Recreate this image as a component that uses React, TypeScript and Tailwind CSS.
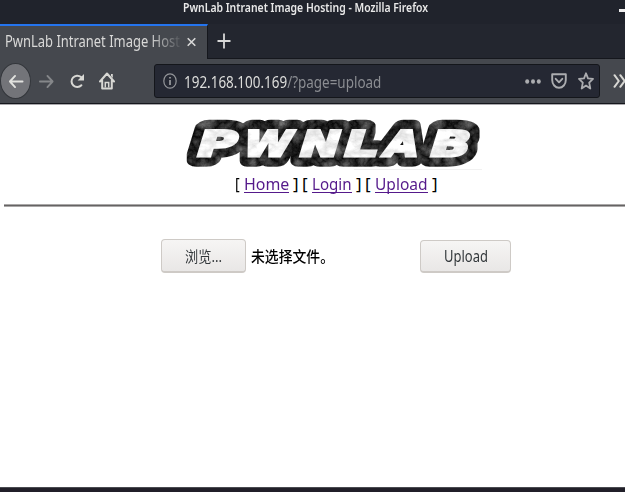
import { useLayoutEffect, useRef, useState, type ReactNode } from "react";

type FitProps = { width: number; className?: string; children: ReactNode };

// Keeps a line of text at a fixed width by condensing it horizontally.
function Fit({ width, className = "", children }: FitProps) {
  const ref = useRef<HTMLSpanElement>(null);
  const [scale, setScale] = useState(1);
  useLayoutEffect(() => {
    if (ref.current) setScale(width / ref.current.offsetWidth);
  }, [width]);
  return (
    <span className={`inline-block shrink-0 whitespace-nowrap ${className}`} style={{ width }}>
      <span ref={ref} className="inline-block origin-left" style={{ transform: `scaleX(${scale})` }}>
        {children}
      </span>
    </span>
  );
}

// left edge on the baseline, wanted ink width, glyph ink start and end in em
const letters = [
  { ch: "P", x: 199, w: 32, a: 0.092, b: 0.685 },
  { ch: "W", x: 242, w: 45, a: 0.03, b: 1.073 },
  { ch: "N", x: 301, w: 31, a: 0.092, b: 0.745 },
  { ch: "L", x: 346, w: 27, a: 0.092, b: 0.6 },
  { ch: "A", x: 382, w: 33, a: 0.003, b: 0.771 },
  { ch: "B", x: 432, w: 32, a: 0.092, b: 0.706 },
];

function Word({ className }: { className: string }) {
  return (
    <g className={className}>
      {letters.map(({ ch, x, w, a, b }) => {
        const size = 35;
        const s = w / ((b - a) * size);
        return (
          <text
            key={ch}
            fontSize={size}
            transform={`translate(${x - 186} 39.7) skewX(-17) scale(${s} 1) translate(${-a * size} 0)`}
          >
            {ch}
          </text>
        );
      })}
    </g>
  );
}

function Logo() {
  return (
    <svg width="300" height="56" viewBox="0 0 300 56" className="block overflow-visible font-['DejaVu_Sans',sans-serif] font-bold">
      <defs>
        <filter id="darkMarble" x="0" y="0" width="300" height="56" filterUnits="userSpaceOnUse" colorInterpolationFilters="sRGB">
          <feMorphology in="SourceAlpha" operator="dilate" radius="0 3" result="plate" />
          <feTurbulence type="turbulence" baseFrequency="0.07 0.07" numOctaves="4" seed="8" />
          <feColorMatrix values="0.55 0 0 0 0.01  0.55 0 0 0 0.01  0.55 0 0 0 0.01  0 0 0 0 1" />
          <feComposite in2="plate" operator="in" />
        </filter>
        <filter id="lightMarble" x="0" y="0" width="300" height="56" filterUnits="userSpaceOnUse" colorInterpolationFilters="sRGB">
          <feTurbulence type="turbulence" baseFrequency="0.05 0.08" numOctaves="4" seed="3" />
          <feColorMatrix values="0.3 0 0 0 0.86  0.3 0 0 0 0.86  0.3 0 0 0 0.86  0 0 0 0 1" />
          <feComposite in2="SourceGraphic" operator="in" />
        </filter>
      </defs>
      <g filter="url(#darkMarble)">
        <Word className="fill-black stroke-black stroke-[15.5px] [stroke-linejoin:round]" />
      </g>
      <g filter="url(#lightMarble)">
        <Word className="fill-white stroke-white stroke-[3px] [stroke-miterlimit:2.5]" />
      </g>
      <path d="M168 53.5h128" className="stroke-[#f1f1f1]" />
    </svg>
  );
}

function BackIcon({ className }: { className: string }) {
  return (
    <svg viewBox="0 0 16 16" className={className} fill="none" strokeWidth="2" strokeLinecap="round" strokeLinejoin="round">
      <path d="M15 8H1.5M7 2 1.5 8 7 14" />
    </svg>
  );
}

function NavLink({ width, children }: { width: number; children: ReactNode }) {
  return (
    <a href="#" className="flex text-[#551a8b]">
      <Fit width={width} className="h-[18px] border-b border-[#551a8b]">{children}</Fit>
    </a>
  );
}

export default function App() {
  return (
    <div className="flex h-[492px] w-[625px] flex-col overflow-hidden bg-white font-['Noto_Sans','Noto_Sans_CJK_SC',sans-serif]">
      <header className="flex h-[24px] shrink-0 bg-[#20232c] pl-[183px] text-[#e8e8e8]">
        <Fit width={245} className="text-[12px] leading-[16px] font-semibold">PwnLab Intranet Image Hosting - Mozilla Firefox</Fit>
        <span className="mt-[9px] ml-auto h-[3px] w-[6px] bg-[#eeeeee]" />
      </header>

      <div className="flex h-[35px] shrink-0 bg-[#23262f]">
        <div className="flex w-[208px] items-center border-t-2 border-r border-t-[#2474ee] border-r-[#15171d] bg-[#45484e] pl-[5px] text-[#d9d9d8]">
          <div className="mb-[3px] w-[176px] overflow-hidden [mask-image:linear-gradient(to_right,black_145px,transparent_178px)]">
            <Fit width={175} className="text-[16.5px] leading-[28px]">PwnLab Intranet Image Host</Fit>
          </div>
          <svg viewBox="0 0 10 10" className="mb-[2px] ml-[6px] h-[10px] w-[9px] stroke-[#d8d8d8]" strokeWidth="1.8"><path d="m.8.8 8.4 8.4M9.2.8.8 9.2" /></svg>
        </div>
        <div className="flex grow border-b border-[#15171d]">
          <svg viewBox="0 0 14 16" className="mt-[9px] ml-[9px] h-[16px] w-[14px] stroke-[#d8d8d8]" strokeWidth="1.8"><path d="M7 .5v15M.5 8h13" /></svg>
        </div>
      </div>

      <nav className="flex h-[45px] shrink-0 items-center border-b border-[#15171d] bg-[#45484e]">
        <div className="flex h-[36px] w-[31px] shrink-0 items-center justify-center rounded-[50%] border border-[#33363b] bg-[#737479]">
          <BackIcon className="h-[15px] w-[16px] stroke-[#e2e2df]" />
        </div>
        <BackIcon className="ml-[8px] h-[15px] w-[15px] -scale-x-100 stroke-[#85878a]" />
        <svg viewBox="0 0 16 16" className="ml-[15px] h-[17px] w-[16px]" fill="none">
          <path d="M12.4 11.8A5.7 5.7 0 1 1 12 3.6" className="stroke-[#d8d8d4]" strokeWidth="2" strokeLinecap="round" />
          <path d="M15 .5V7H8.6Z" className="fill-[#d8d8d4]" />
        </svg>
        <svg viewBox="0 0 16 18" className="ml-[14px] h-[18px] w-[16px]" fill="none">
          <path d="M1 9.5 8 1.5l7 8M3.2 8.5v8h9.6v-8" className="stroke-[#d8d8d4]" strokeWidth="2" strokeLinecap="round" strokeLinejoin="round" />
          <path d="M6.3 15.5v-5h3.4v5" className="stroke-[#d8d8d4]" strokeWidth="1.5" />
          <path d="M12 2h1.8v4L12 4Z" className="fill-[#d8d8d4]" />
        </svg>
        <div className="ml-[39px] flex h-[34px] w-[446px] shrink-0 items-center rounded-[3px] border border-[#14161b] bg-[#252833] pl-[8px]">
          <svg viewBox="0 0 14 16" className="h-[16px] w-[14px] stroke-[#94969a]" fill="none">
            <ellipse cx="7" cy="8" rx="6.2" ry="7.2" strokeWidth="1.2" />
            <path d="M7 7v5M7 4v1.5" strokeWidth="1.8" />
          </svg>
          <Fit width={197} className="mt-[2px] ml-[7px] text-[17px] leading-[30px] text-[#8b8d92]"><span className="text-[#dededc]">192.168.100.169</span>/?page=upload</Fit>
          <svg viewBox="0 0 16 5" className="ml-auto h-[5px] w-[16px] fill-[#acadb0]"><ellipse cx="2.2" cy="2.5" rx="2" ry="2.2" /><ellipse cx="8" cy="2.5" rx="2" ry="2.2" /><ellipse cx="13.8" cy="2.5" rx="2" ry="2.2" /></svg>
          <svg viewBox="0 0 16 16" className="ml-[10px] h-[16px] w-[16px] stroke-[#acadb0]" fill="none" strokeWidth="1.9" strokeLinejoin="round"><path d="M1.2 1.2h13.6V7c0 4.4-3 7.7-6.8 7.7S1.2 11.4 1.2 7Z" /><path d="m4.7 5.8 3.3 3.5 3.3-3.5" strokeLinecap="round" /></svg>
          <svg viewBox="0 0 16 18" className="mr-[5px] ml-[11px] h-[18px] w-[16px] stroke-[#acadb0]" fill="none" strokeWidth="1.8" strokeLinejoin="round"><path d="m8 1.3 2 5 5 .6-3.8 3.8 1.1 5.8L8 13.6l-4.3 2.9 1.1-5.8L1 6.9l5-.6Z" /></svg>
        </div>
        <svg viewBox="0 0 12 14" className="ml-[13px] h-[14px] w-[12px] shrink-0 stroke-[#d8d8d4]" fill="none" strokeWidth="2" strokeLinecap="round" strokeLinejoin="round"><path d="m1.5 1.2 4.3 5.8-4.3 5.8M7.3 1.2 11.6 7l-4.3 5.8" /></svg>
      </nav>

      <main className="flex grow flex-col border-t border-[#aaa9ad]">
        <div className="mt-[11px] ml-[186px] h-[56px]"><Logo /></div>
        <div className="ml-[235px] flex h-[32px] items-start pt-[3px] text-[17px] leading-[17px] text-black">
          <Fit width={5}>[</Fit>
          <span className="ml-[4px]"><NavLink width={45}>Home</NavLink></span>
          <Fit width={6} className="ml-[4px]">]</Fit>
          <Fit width={6} className="ml-[3px]">[</Fit>
          <span className="ml-[4px]"><NavLink width={40}>Login</NavLink></span>
          <Fit width={6} className="ml-[4px]">]</Fit>
          <Fit width={6} className="ml-[3px]">[</Fit>
          <span className="ml-[4px]"><NavLink width={53}>Upload</NavLink></span>
          <Fit width={6} className="ml-[4px]">]</Fit>
        </div>
        <div className="ml-[4px] h-[3px] border-y border-[#aaa8a8] bg-[#656363]" />
        <form className="mt-[32px] flex items-center pl-[161px]">
          <button type="button" className="flex h-[34px] w-[85px] items-center justify-center rounded-[4px] border border-b-2 border-[#cecac6] bg-linear-to-b from-[#f6f5f4] to-[#e9e7e6] text-[#33383b]">
            <Fit width={37} className="text-[15px] leading-[20px]">浏览...</Fit>
          </button>
          <Fit width={83} className="ml-[5px] text-[15px] leading-[20px] font-medium text-black">未选择文件。</Fit>
          <button type="button" className="ml-[86px] flex h-[33px] w-[91px] items-center justify-center rounded-[4px] border border-b-2 border-[#cecac6] bg-linear-to-b from-[#f6f5f4] to-[#e9e7e6] text-[#33383b]">
            <Fit width={44} className="text-[16.5px] leading-[20px]">Upload</Fit>
          </button>
        </form>
      </main>
      <footer className="h-[5px] shrink-0 border-t border-[#4a4b51] bg-[#211f29]" />
    </div>
  );
}
